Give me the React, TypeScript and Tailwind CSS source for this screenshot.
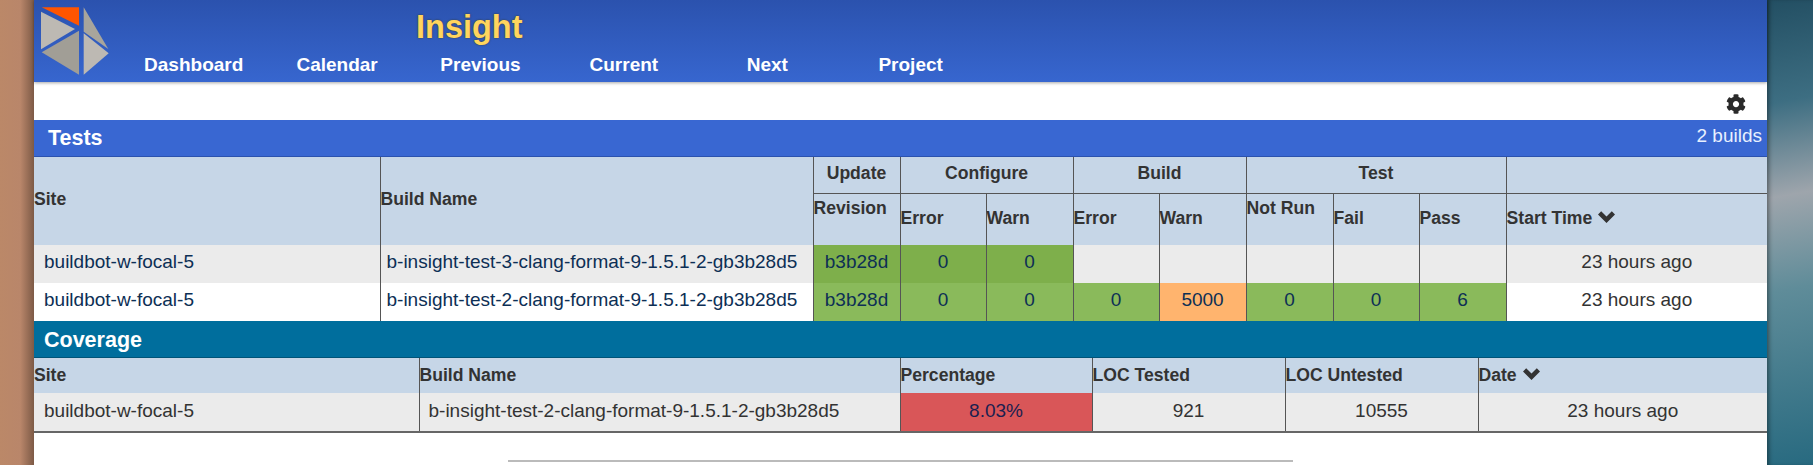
import React from "react";
import { FaCog } from "react-icons/fa";

const th = "border-l border-[#555] first:border-l-0 p-0 font-bold text-left align-middle";
const thC = "border-l border-[#555] p-0 pb-[3px] font-bold text-center align-middle";
const td = "border-l border-[#555] first:border-l-0 p-0 align-middle font-normal text-[19px]";
const green1 = "bg-[#7eaf4b] text-center text-[#0d2f55] pb-[5px]";
const green2 = "bg-[#8aba5b] text-center text-[#0d2f55] pb-[5px]";

function Logo() {
  return (
    <svg className="absolute left-0 top-0" width="80" height="82" viewBox="34 0 80 82">
      <polygon points="41.7,7.3 79,7.3 79,25.7" fill="#ff5500" />
      <polygon points="41,11.7 75,29 41,49.3" fill="#bdb9b3" />
      <polygon points="41.7,52.3 79,30.7 79,74.7" fill="#a19e96" />
      <polygon points="83.7,7.3 108.3,49 83.7,31.7" fill="#a8a59c" />
      <polygon points="83.7,33.3 108.7,53.3 83.7,74.7" fill="#bdb9b3" />
    </svg>
  );
}

function Chevron() {
  return (
    <svg width="17" height="12" viewBox="0 0 17 12" className="shrink-0 -translate-y-[1px]">
      <polygon points="0,3.5 3.2,0.3 8.5,5.6 13.8,0.3 17,3.5 8.5,12" fill="#333" />
    </svg>
  );
}

const nav = ["Dashboard", "Calendar", "Previous", "Current", "Next", "Project"];

export default function App() {
  return (
    <div className="flex h-[465px] w-[1813px] overflow-hidden font-['Liberation_Sans',Arial,sans-serif] text-[17.6px] leading-[20px] text-[#333]">
      <div className="w-[34px] shrink-0 bg-[linear-gradient(90deg,#bb8868_0%,#b9866a_60%,#7d5a46_100%)]" />
      <main className="w-[1733px] shrink-0 bg-white">
        <header className="relative h-[82px] bg-[linear-gradient(180deg,#2b52ae,#3766cf)] shadow-[0_1px_3px_rgba(0,0,0,0.35)]">
          <Logo />
          <div className="h-[54px] pl-[382px] pt-[8px] text-[32.5px] font-bold leading-[38px] text-[#ffd55e] [text-shadow:0_0_2px_#3a3a20]">
            Insight
          </div>
          <nav className="flex pl-[88px]">
            {nav.map((n) => (
              <span key={n} className="w-[143.4px] text-center text-[19px] font-bold leading-[22px] text-white">
                {n}
              </span>
            ))}
          </nav>
        </header>

        <div className="flex h-[38px] items-center justify-end pr-[21px] pt-[6px]">
          <FaCog className="text-[20px] text-[#2a2a2a]" />
        </div>

        <section className="flex h-[37px] justify-between border-b border-[#2b52ae] bg-[#3967d2] pl-[14px] pr-[5px] text-white">
          <h2 className="text-[21.5px] font-bold leading-[36px]">Tests</h2>
          <span className="pt-[6px] text-[19px] leading-[20px] text-[#e8f0ff]">2 builds</span>
        </section>
        <table className="w-full table-fixed border-collapse">
          <colgroup>
            <col className="w-[346px]" />
            <col className="w-[433px]" />
            <col className="w-[87px]" />
            <col className="w-[86px]" />
            <col className="w-[87px]" />
            <col className="w-[86px]" />
            <col className="w-[87px]" />
            <col className="w-[87px]" />
            <col className="w-[86px]" />
            <col className="w-[87px]" />
            <col />
          </colgroup>
          <thead className="bg-[#c6d6e7]">
            <tr className="h-[36px]">
              <th rowSpan={2} className={th + " pb-[5px]"}>Site</th>
              <th rowSpan={2} className={th + " pb-[5px]"}>Build Name</th>
              <th className={thC}>Update</th>
              <th colSpan={2} className={thC}>Configure</th>
              <th colSpan={2} className={thC}>Build</th>
              <th colSpan={3} className={thC}>Test</th>
              <th className={thC} />
            </tr>
            <tr className="h-[52px] border-t border-[#555]">
              <th className={th + " !border-l pb-[2px]"}>Revision<br />&nbsp;</th>
              <th className={th + " pb-[2px]"}>Error</th>
              <th className={th + " pb-[2px]"}>Warn</th>
              <th className={th + " pb-[2px]"}>Error</th>
              <th className={th + " pb-[2px]"}>Warn</th>
              <th className={th + " pb-[2px]"}>Not Run<br />&nbsp;</th>
              <th className={th + " pb-[2px]"}>Fail</th>
              <th className={th + " pb-[2px]"}>Pass</th>
              <th className={th + " pb-[2px]"}>
                <span className="inline-flex items-center gap-[6px]">Start Time <Chevron /></span>
              </th>
            </tr>
          </thead>
          <tbody>
            <tr className="h-[38px] bg-[#ebebeb]">
              <td className={td + " pb-[5px] pl-[10px] text-[#0d2f55]"}>buildbot-w-focal-5</td>
              <td className={td + " pb-[5px] pl-[6px] text-[#0d2f55]"}>b-insight-test-3-clang-format-9-1.5.1-2-gb3b28d5</td>
              <td className={td + " " + green1}>b3b28d</td>
              <td className={td + " " + green1}>0</td>
              <td className={td + " " + green1}>0</td>
              <td className={td} />
              <td className={td} />
              <td className={td} />
              <td className={td} />
              <td className={td} />
              <td className={td + " pb-[5px] text-center"}>23 hours ago</td>
            </tr>
            <tr className="h-[38px] bg-white">
              <td className={td + " pb-[5px] pl-[10px] text-[#0d2f55]"}>buildbot-w-focal-5</td>
              <td className={td + " pb-[5px] pl-[6px] text-[#0d2f55]"}>b-insight-test-2-clang-format-9-1.5.1-2-gb3b28d5</td>
              <td className={td + " " + green2}>b3b28d</td>
              <td className={td + " " + green2}>0</td>
              <td className={td + " " + green2}>0</td>
              <td className={td + " " + green2}>0</td>
              <td className={td + " bg-[#ffb46e] pb-[5px] text-center text-[#0d2f55]"}>5000</td>
              <td className={td + " " + green2}>0</td>
              <td className={td + " " + green2}>0</td>
              <td className={td + " " + green2}>6</td>
              <td className={td + " pb-[5px] text-center"}>23 hours ago</td>
            </tr>
          </tbody>
        </table>

        <section className="h-[37px] border-b border-[#005478] bg-[#006e9d] pl-[10px] text-[21.5px] font-bold leading-[38px] text-white">
          Coverage
        </section>
        <table className="w-full table-fixed border-collapse border-b-2 border-[#666]">
          <colgroup>
            <col className="w-[385px]" />
            <col className="w-[481px]" />
            <col className="w-[192px]" />
            <col className="w-[193px]" />
            <col className="w-[193px]" />
            <col />
          </colgroup>
          <thead className="bg-[#c6d6e7]">
            <tr className="h-[35px]">
              <th className={th + " pb-[2px]"}>Site</th>
              <th className={th + " pb-[2px]"}>Build Name</th>
              <th className={th + " pb-[2px]"}>Percentage</th>
              <th className={th + " pb-[2px]"}>LOC Tested</th>
              <th className={th + " pb-[2px]"}>LOC Untested</th>
              <th className={th + " pb-[2px]"}>
                <span className="inline-flex items-center gap-[6px]">Date <Chevron /></span>
              </th>
            </tr>
          </thead>
          <tbody>
            <tr className="h-[39px] bg-[#ebebeb]">
              <td className={td + " pb-[2px] pl-[10px]"}>buildbot-w-focal-5</td>
              <td className={td + " pb-[2px] pl-[9px]"}>b-insight-test-2-clang-format-9-1.5.1-2-gb3b28d5</td>
              <td className={td + " bg-[#d95658] pb-[2px] text-center text-[#1a2050]"}>8.03%</td>
              <td className={td + " pb-[2px] text-center"}>921</td>
              <td className={td + " pb-[2px] text-center"}>10555</td>
              <td className={td + " pb-[2px] text-center"}>23 hours ago</td>
            </tr>
          </tbody>
        </table>

        <div className="mx-auto mt-[27px] w-[785px] border-t-2 border-[#bbb]" />
      </main>
      <div className="flex-1 shadow-[inset_4px_0_4px_-2px_rgba(0,0,0,0.4)] bg-[linear-gradient(170deg,#234f63_0%,#3d6e82_22%,#9ea5ac_42%,#5f8c99_62%,#286a80_100%)]" />
    </div>
  );
}
